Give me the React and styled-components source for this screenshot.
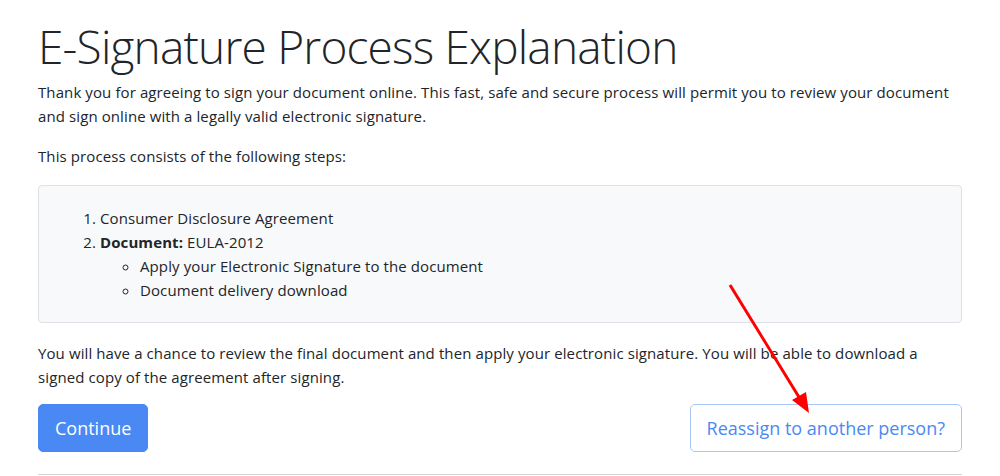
import styled, { createGlobalStyle } from "styled-components";

const GlobalStyle = createGlobalStyle`
  * { box-sizing: border-box; }
  body {
    margin: 0;
    font-family: "Open Sans", "Noto Sans", sans-serif;
    font-size: 15px;
    line-height: 24px;
    letter-spacing: 0.1px;
    color: #212529;
    background: #fff;
  }
`;

const Page = styled.main`
  position: relative;
  padding: 13px 38px 0;
  width: 1000px;
`;

const Title = styled.h1`
  margin: 0;
  font-family: "Open Sans", sans-serif;
  font-weight: 300;
  font-size: 46px;
  line-height: 67px;
  letter-spacing: -0.8px;
`;

const Text = styled.p`
  margin: 0 0 ${(p) => p.$gap || 16}px;
`;

const Well = styled.div`
  background: #f8f9fa;
  border: 1px solid #dee2e6;
  border-radius: 4px;
  padding: 20px 44px 20px;
  margin-bottom: 18px;
`;

const Steps = styled.ol`
  margin: 0;
  padding-left: 17px;
`;

const SubSteps = styled.ul`
  margin: 0;
  padding-left: 40px;
  list-style: circle;
`;

const Actions = styled.div`
  display: flex;
  justify-content: space-between;
  align-items: center;
  padding-bottom: 22px;
  border-bottom: 1px solid #d5d5d5;
`;

const Button = styled.button`
  font-family: "Open Sans", sans-serif;
  font-size: 18px;
  line-height: 30px;
  padding: 8px 16px;
  border-radius: 5px;
  cursor: pointer;
  border: 1px solid ${(p) => (p.$outline ? "#a9c8fa" : "#4a89f3")};
  background: ${(p) => (p.$outline ? "#fff" : "#4a89f3")};
  color: ${(p) => (p.$outline ? "#4a89f3" : "#fff")};
`;

const Arrow = styled.svg`
  position: absolute;
  left: 720px;
  top: 278px;
  pointer-events: none;
`;

export default function App() {
  return (
    <>
      <GlobalStyle />
      <Page>
        <Title>E-Signature Process Explanation</Title>
        <Text>
          Thank you for agreeing to sign your document online. This fast, safe and secure
          process will permit you to review your document and sign online with a legally
          valid electronic signature.
        </Text>
        <Text $gap={17}>This process consists of the following steps:</Text>
        <Well>
          <Steps>
            <li>Consumer Disclosure Agreement</li>
            <li>
              <b>Document:</b> EULA-2012
              <SubSteps>
                <li>Apply your Electronic Signature to the document</li>
                <li>Document delivery download</li>
              </SubSteps>
            </li>
          </Steps>
        </Well>
        <Text $gap={15}>
          You will have a chance to review the final document and then apply your electronic
          signature. You will be able to download a signed copy of the agreement after signing.
        </Text>
        <Actions>
          <Button>Continue</Button>
          <Button $outline>Reassign to another person?</Button>
        </Actions>
        <Arrow width="110" height="150" viewBox="0 0 110 150">
          <line x1="10" y1="7" x2="82" y2="124" stroke="#f00" strokeWidth="3" />
          <polygon points="89,135 72,122 86,114" fill="#f00" />
        </Arrow>
      </Page>
    </>
  );
}
